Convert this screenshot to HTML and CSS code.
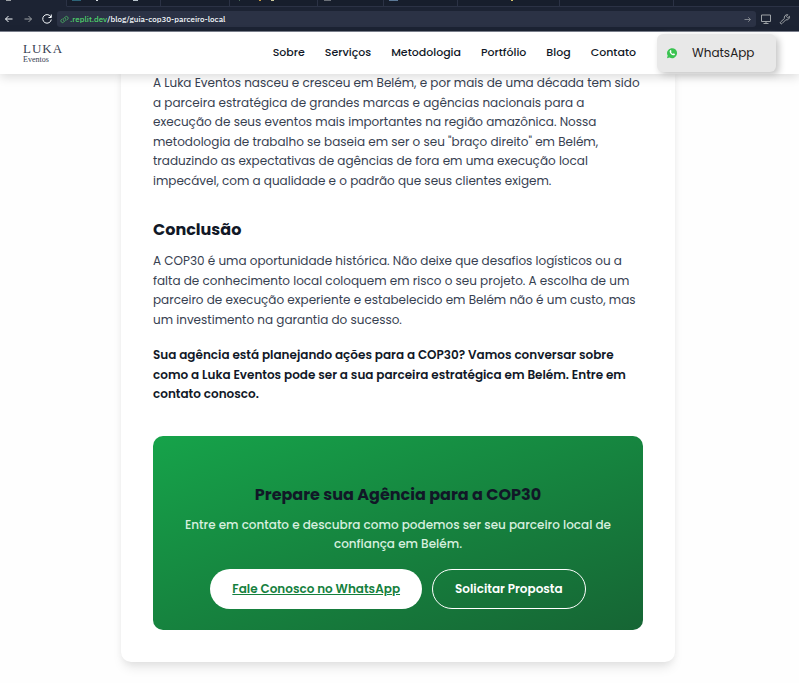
FILE: index.html
```html
<!DOCTYPE html>
<html lang="pt-BR">
<head>
<meta charset="utf-8">
<title>Guia COP30 – Luka Eventos</title>
<link rel="stylesheet" href="styles.css">
</head>
<body>
<div class="browser">
  <div class="tabs"><i class="tab tab-active"></i><i class="tab tab-teal"></i><i class="tab"></i><i class="tab tab-gold"></i><i class="tab tab-grey"></i><i class="tab tab-blue"></i><i class="tab tab-dot"></i><i class="tab"></i><i class="tab tab-last"></i></div>
  <div class="toolbar">
    <button class="tool" aria-label="Voltar"><svg viewBox="0 0 12 12"><path d="M9.500 6H2.500M5.500 3L2.500 6l3 3"/></svg></button>
    <button class="tool dim" aria-label="Avançar"><svg viewBox="0 0 12 12"><path d="M2.500 6h7M6.500 3l3 3-3 3"/></svg></button>
    <button class="tool" aria-label="Recarregar"><svg viewBox="0 0 12 12"><path d="M10 4.200A4.300 4.300 0 1 0 10.300 6.500M10.300 1.500v3H7.500"/></svg></button>
    <div class="address">
      <svg class="link-icon" viewBox="0 0 12 12"><path d="M5 7.800a2.200 2.200 0 0 1 0-3.200L7 2.600a2.200 2.200 0 0 1 3.200 3.200L8.900 7.100M7 4.200a2.200 2.200 0 0 1 0 3.200L5 9.400a2.200 2.200 0 0 1-3.200-3.200L3.100 4.900"/></svg>
      <span class="url"><span class="host">.replit.dev</span>/blog/guia-cop30-parceiro-local</span>
      <svg class="go" viewBox="0 0 12 12"><path d="M2 6h7.500M7 3l3 3-3 3"/></svg>
    </div>
    <div class="tools-end">
      <button class="tool dim" aria-label="Tela"><svg viewBox="0 0 12 12"><path d="M1.500 2h9v6.500h-9zM6 8.500v2M3.500 10.500h5"/></svg></button>
      <button class="tool dim" aria-label="Ferramentas"><svg viewBox="0 0 12 12"><path d="M10.500 3.300L8.700 4.800 7.300 3.500 8.800 1.700A3 3 0 0 0 5.400 5.500L1.600 9a1 1 0 0 0 1.500 1.500L6.800 6.800a3 3 0 0 0 3.700-3.500z"/></svg></button>
      <button class="tool dim" aria-label="Abrir"><svg viewBox="0 0 12 12"><path d="M8 3H1.500v7.500h8V6"/></svg></button>
    </div>
  </div>
</div>
<header class="site-header">
  <a class="logo" href="#"><span class="logo-name">LUKA</span><span class="logo-sub">Eventos</span></a>
  <nav class="nav">
    <a href="#">Sobre</a><a href="#">Serviços</a><a href="#">Metodologia</a><a href="#">Portfólio</a><a href="#">Blog</a><a href="#">Contato</a>
  </nav>
  <a class="whatsapp" href="#"><svg viewBox="0 0 12 12"><path class="wa-bg" d="M1 11.200L1.700 8.600A5 5 0 1 1 3.600 10.500z"/><path class="wa-phone" d="M4.200 3.200c.5-.4.8-.2 1 .3l.3.800-.5.700c.4.900 1.100 1.500 2 1.900l.7-.7 1.200.7c.2.800-.6 1.500-1.500 1.400C5.500 8 3.900 6.300 3.600 4.700c0-.6.200-1.200.6-1.500z"/></svg>WhatsApp</a>
</header>
<main class="card">
  <p>A Luka Eventos nasceu e cresceu em Belém, e por mais de uma década tem sido<br>a parceira estratégica de grandes marcas e agências nacionais para a<br>execução de seus eventos mais importantes na região amazônica. Nossa<br>metodologia de trabalho se baseia em ser o seu "braço direito" em Belém,<br>traduzindo as expectativas de agências de fora em uma execução local<br>impecável, com a qualidade e o padrão que seus clientes exigem.</p>
  <h2>Conclusão</h2>
  <p>A COP30 é uma oportunidade histórica. Não deixe que desafios logísticos ou a<br>falta de conhecimento local coloquem em risco o seu projeto. A escolha de um<br>parceiro de execução experiente e estabelecido em Belém não é um custo, mas<br>um investimento na garantia do sucesso.</p>
  <p class="strong">Sua agência está planejando ações para a COP30? Vamos conversar sobre<br>como a Luka Eventos pode ser a sua parceira estratégica em Belém. Entre em<br>contato conosco.</p>
  <section class="cta">
    <h3>Prepare sua Agência para a COP30</h3>
    <p class="cta-text">Entre em contato e descubra como podemos ser seu parceiro local de<br>confiança em Belém.</p>
    <div class="actions"><a class="pill pill-solid" href="#">Fale Conosco no WhatsApp</a><a class="pill pill-line" href="#">Solicitar Proposta</a></div>
  </section>
</main>
</body>
</html>
```
FILE: styles.css
```css
* { box-sizing: border-box; }
body { margin: 0; background: #fefefe; font-family: Poppins, Inter, sans-serif; font-size: 12px; line-height: 1.625; color: #374151; overflow-x: hidden; }
a { color: inherit; text-decoration: none; }

.browser { background: #1c2333; border-bottom: 1px solid #7d8290; overflow: hidden; }
.tabs { display: grid; grid-template-columns: 67px 94px 69px 88px 66px 74px 102px 114px 1fr; height: 7px; background: #171e2c; }
.tab { border-right: 1px solid #2b3245; border-bottom: 1px solid #2b3245; background-repeat: no-repeat; }
.tab-active { background-color: #1c2333; border-bottom-color: #1c2333; background-image: linear-gradient(#9da2a6, #9da2a6); background-size: 5px 1px; background-position: 6px 0; }
.tab-teal { background-image: linear-gradient(#2d6478, #2d6478), linear-gradient(#d5dbe0, #d5dbe0), linear-gradient(#b9c4cc, #b9c4cc); background-size: 9px 1px, 2px 1px, 5px 1px; background-position: 5px 0, 29px 0, 66px 0; }
.tab-gold { background-image: linear-gradient(#4a6b58, #4a6b58), linear-gradient(#c79a3f, #c79a3f), linear-gradient(#c9c79a, #c9c79a); background-size: 1px 1px, 2px 1px, 3px 1px; background-position: 9px 0, 29px 0, 41px 0; }
.tab-grey { background-image: linear-gradient(#6b7078, #6b7078); background-size: 7px 1px; background-position: 6px 0; }
.tab-blue { background-image: linear-gradient(#5b7896, #5b7896); background-size: 9px 1px; background-position: 5px 0; }
.tab-dot { background-image: linear-gradient(#d3c06a, #d3c06a); background-size: 2px 1px; background-position: 53px 0; }
.tab-last { border-right: 0; }

.toolbar { display: flex; align-items: center; height: 24px; }
.tool { flex: none; width: 19px; height: 20px; padding: 0 3px; border: 0; background: none; color: #f5f9fc; display: flex; align-items: center; }
.tool svg { width: 12px; height: 12px; }
.tool.dim { color: #9da2a6; }
.browser svg { fill: none; stroke: currentColor; stroke-width: 1; }
.address { flex: 1; height: 16px; display: flex; align-items: center; background: #2b3245; border-radius: 3px; padding: 0 4px 0 3px; color: #f5f9fc; }
.link-icon { width: 9px; height: 9px; color: #4fbf68; }
.url { flex: 1; font: 500 8px/16px "IBM Plex Sans", Roboto, sans-serif; padding-left: 1px; }
.host { color: #4fd16c; }
.go { width: 9px; height: 9px; color: #9da2a6; }
.tools-end { display: flex; width: 43px; padding-left: 1px; overflow: hidden; }

.site-header { position: relative; z-index: 1; display: flex; align-items: center; height: 42px; padding: 0 23px; background: #fff; box-shadow: 0 3px 10px rgba(0,0,0,.14); }
.logo { display: flex; flex-direction: column; font-family: "Liberation Serif", serif; color: #374151; }
.logo-name { font-size: 13px; line-height: 12px; letter-spacing: 1px; }
.logo-sub { font-size: 8px; line-height: 9px; }
.nav { display: flex; gap: 20px; margin-left: auto; font-size: 11px; font-weight: 500; color: #111827; }
.whatsapp { display: flex; align-items: center; gap: 14px; width: 119px; height: 38px; margin-left: 21px; padding-left: 9px; border-radius: 6px; background: #e8e8e8; box-shadow: 3px 3px 7px #c5c5c5; color: #1f2020; }
.whatsapp svg { width: 12px; height: 12px; }
.wa-bg { fill: #3ac351; }
.wa-phone { fill: #fff; }

.card { width: calc(100% - 245px); max-width: 896px; margin: -13px auto 21px 121px; padding: 12px 32px 32px; border-radius: 10px; background: #fff; box-shadow: 0 8px 12px -3px rgba(0,0,0,.1), 0 2px 6px rgba(0,0,0,.04); white-space: nowrap; }
p { margin: 0; }
h2, h3 { margin: 0; font-size: 16px; line-height: 24px; font-weight: 700; color: #111827; }
h2 { margin: 28px 0 9px; }
.strong { margin-top: 16px; font-weight: 600; color: #111827; }
.cta { margin-top: 32px; padding: 47px 20px 21px; border-radius: 10px; background: linear-gradient(160deg, #16a34a, #166534); text-align: center; }
.cta-text { margin: 8px 0 15px; font-weight: 500; color: #d7efdf; }
.actions { display: flex; justify-content: center; gap: 10px; }
.pill { display: flex; align-items: center; justify-content: center; height: 40px; padding: 0 22px; border-radius: 20px; font-weight: 600; }
.pill-solid { background: #fff; color: #15803d; text-decoration: underline; }
.pill-line { border: 1px solid #fff; color: #fff; }
```
